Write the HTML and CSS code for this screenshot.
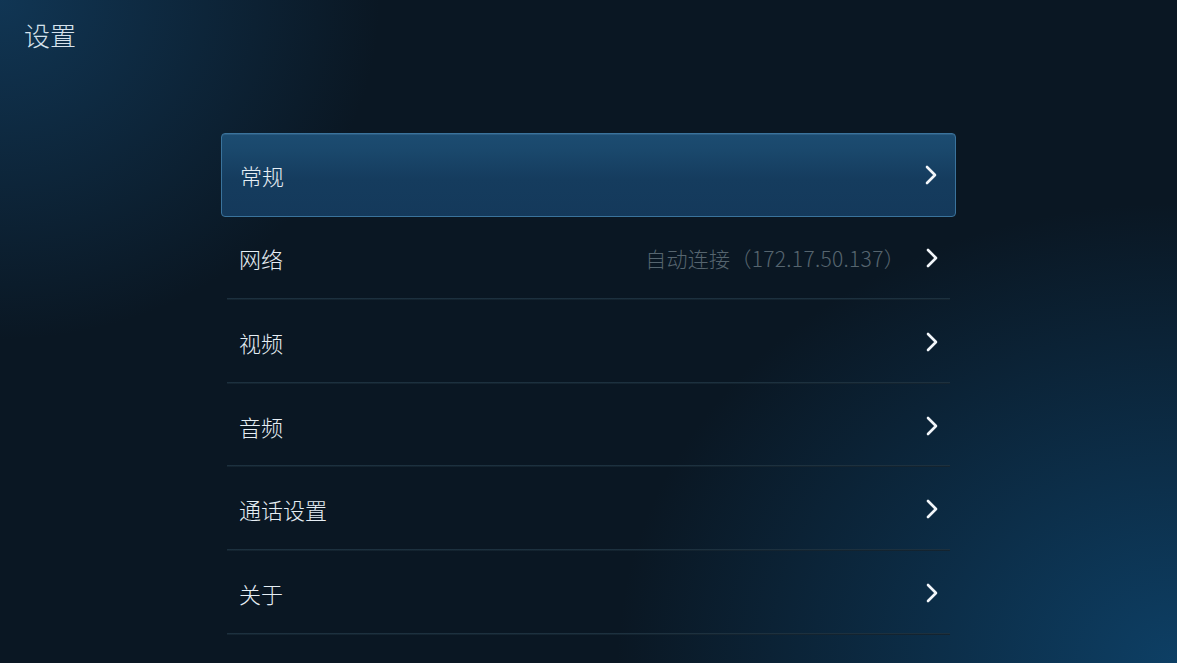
FILE: index.html
```html
<!DOCTYPE html>
<html lang="zh-CN">
<head>
    <meta charset="UTF-8">
    <meta name="viewport" content="width=device-width, initial-scale=1.0">
    <title>设置</title>
    <link rel="stylesheet" href="styles.css">
</head>
<body>

<div class="screen">
    <div class="header">
        <h1 class="title">设置</h1>
    </div>

    <ul class="menu">
        <li class="menu-item active">
            <span class="label">常规</span>
            <span class="value"></span>
            <svg class="arrow" viewBox="0 0 14 20"><path d="M3 2 L11 10 L3 18"/></svg>
        </li>
        <li class="menu-item">
            <span class="label">网络</span>
            <span class="value">自动连接（172.17.50.137）</span>
            <svg class="arrow" viewBox="0 0 14 20"><path d="M3 2 L11 10 L3 18"/></svg>
        </li>
        <li class="menu-item">
            <span class="label">视频</span>
            <span class="value"></span>
            <svg class="arrow" viewBox="0 0 14 20"><path d="M3 2 L11 10 L3 18"/></svg>
        </li>
        <li class="menu-item">
            <span class="label">音频</span>
            <span class="value"></span>
            <svg class="arrow" viewBox="0 0 14 20"><path d="M3 2 L11 10 L3 18"/></svg>
        </li>
        <li class="menu-item">
            <span class="label">通话设置</span>
            <span class="value"></span>
            <svg class="arrow" viewBox="0 0 14 20"><path d="M3 2 L11 10 L3 18"/></svg>
        </li>
        <li class="menu-item">
            <span class="label">关于</span>
            <span class="value"></span>
            <svg class="arrow" viewBox="0 0 14 20"><path d="M3 2 L11 10 L3 18"/></svg>
        </li>
    </ul>
</div>

</body>
</html>
```

FILE: styles.css
```css
html, body {
    margin: 0;
    height: 100%;
}
body {
    font-family: "Noto Sans CJK SC", "Noto Sans", sans-serif;
    font-weight: 300;
    color: #e4ecf2;
    background-color: #0a1723;
    background-image:
        radial-gradient(ellipse 380px 340px at 0 0, rgba(20, 70, 110, 0.65), rgba(20, 70, 110, 0) 100%),
        radial-gradient(ellipse 560px 460px at 100% 100%, rgba(14, 70, 112, 0.85), rgba(14, 70, 112, 0) 100%);
    overflow: hidden;
}
.screen {
    height: 663px;
    display: flex;
    flex-direction: column;
}
.header {
    padding: 16px 24px 0;
    height: 133px;
    flex-shrink: 0;
    box-sizing: border-box;
}
.title {
    margin: 0;
    font-size: 26px;
    font-weight: 300;
    line-height: 38px;
    color: #d6e2ec;
}
.menu {
    list-style: none;
    margin: 0 auto;
    padding: 0;
    width: 735px;
}
.menu-item {
    position: relative;
    height: 83.6px;
    box-sizing: border-box;
    display: flex;
    align-items: center;
    padding: 0 17px 0 18px;
    font-size: 22px;
}
.menu-item::after {
    content: "";
    position: absolute;
    left: 6px;
    right: 6px;
    bottom: 0;
    height: 2px;
    background: linear-gradient(#213746, #0f1d28);
}
.menu-item.active {
    border: 1px solid #3a739c;
    border-radius: 4px;
    background: linear-gradient(#1c4c71 0%, #1a486c 20%, #153c5e 55%, #14395b 100%);
    box-shadow: inset 0 1px 0 rgba(110, 160, 200, 0.2);
}
.menu-item.active::after {
    display: none;
}
.label {
    flex: 1;
    color: #e6eef4;
}
.value {
    color: #56656f;
    font-size: 21px;
    letter-spacing: 0.3px;
    margin-right: 20px;
}
.arrow {
    width: 14px;
    height: 20px;
    fill: none;
    stroke: #f2f6fa;
    stroke-width: 2.6;
    stroke-linecap: round;
    stroke-linejoin: round;
}
```
